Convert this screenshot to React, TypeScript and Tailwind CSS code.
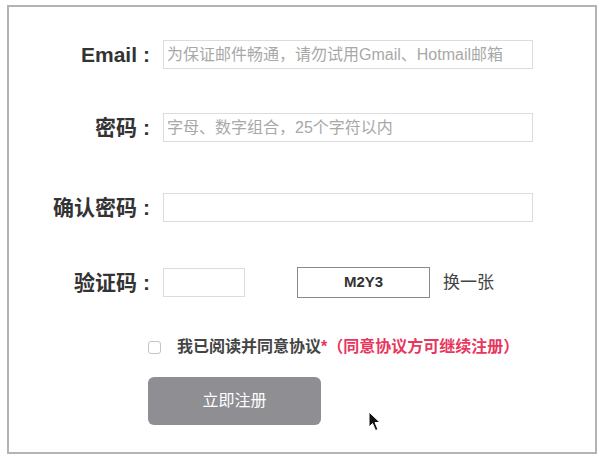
import React from 'react';

const font = { fontFamily: '"Liberation Sans", "Noto Sans CJK SC", sans-serif' };

function Label({ text }: { text: string }) {
  return (
    <label className="w-[146px] shrink-0 text-right text-[21px] font-bold text-[#333] leading-none pr-[5px]">
      {text}
      <span className="ml-[6px]">:</span>
    </label>
  );
}

function Row({ label, placeholder, className }: { label: string; placeholder?: string; className?: string }) {
  return (
    <div className={'flex items-center ' + (className ?? '')}>
      <Label text={label} />
      <input
        className="ml-[8px] h-[29px] w-[370px] border border-[#dcdcdc] px-[3px] text-[16px] text-[#333] outline-none placeholder:text-[#a8a8a8]"
        placeholder={placeholder}
      />
    </div>
  );
}

export default function App() {
  return (
    <div className="w-[604px] h-[460px] bg-white pt-[5px] px-[7px]" style={font}>
      <div className="relative h-[449px] border-2 border-[#b4b4b4] pt-[33px]">
        <Row label="Email" placeholder="为保证邮件畅通，请勿试用Gmail、Hotmail邮箱" />
        <Row label="密码" placeholder="字母、数字组合，25个字符以内" className="mt-[44px]" />
        <Row label="确认密码" className="mt-[51px]" />

        <div className="mt-[45px] flex items-center">
          <Label text="验证码" />
          <input className="ml-[8px] h-[29px] w-[82px] border border-[#dcdcdc] outline-none" />
          <div className="ml-[52px] flex h-[31px] w-[133px] items-center justify-center border border-[#8a8a8a] text-[15px] font-bold text-[#333]">
            M2Y3
          </div>
          <span className="ml-[13px] text-[17px] text-[#444]">换一张</span>
        </div>

        <div className="mt-[37px] flex items-center pl-[139px]">
          <span className="h-[13px] w-[13px] rounded-[3px] border border-[#c4c4c4] bg-white" />
          <span className="ml-[16px] text-[16px] font-bold text-[#444]">我已阅读并同意协议</span>
          <span className="text-[16px] font-bold text-[#e8365d]">*（同意协议方可继续注册）</span>
        </div>

        <button className="ml-[139px] mt-[18px] flex h-[48px] w-[173px] items-center justify-center rounded-[6px] bg-[#8e8e93] text-[16px] text-white">
          立即注册
        </button>

        <svg className="absolute left-[359px] top-[404px]" width="14" height="22" viewBox="0 0 14 22">
          <path d="M1 1 L1 16 L4.5 12.5 L7.5 19.5 L10 18.5 L7 11.5 L12 11.5 Z" fill="#111" stroke="#fff" strokeWidth="1" />
        </svg>
      </div>
    </div>
  );
}
